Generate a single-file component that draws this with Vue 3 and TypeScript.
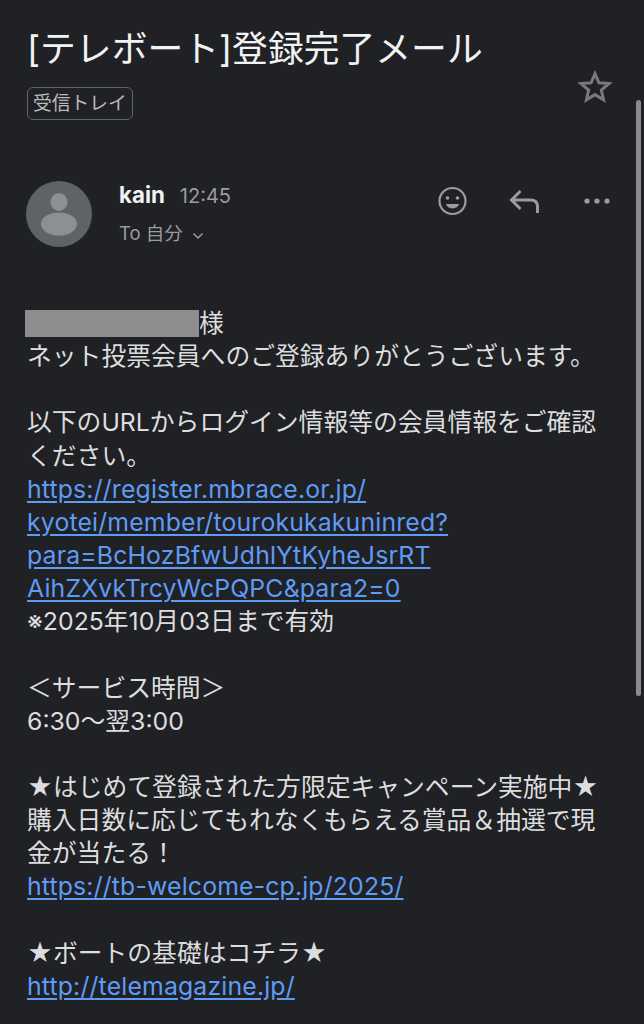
<script setup lang="ts">
interface Line { text?: string; href?: boolean }
const lines: Line[] = [
  { text: 'ネット投票会員へのご登録ありがとうございます。' },
  {},
  { text: '以下のURLからログイン情報等の会員情報をご確認' },
  { text: 'ください。' },
  { text: 'https://register.mbrace.or.jp/', href: true },
  { text: 'kyotei/member/tourokukakuninred?', href: true },
  { text: 'para=BcHozBfwUdhlYtKyheJsrRT', href: true },
  { text: 'AihZXvkTrcyWcPQPC&para2=0', href: true },
  { text: '※2025年10月03日まで有効' },
  {},
  { text: '＜サービス時間＞' },
  { text: '6:30〜翌3:00' },
  {},
  { text: '★はじめて登録された方限定キャンペーン実施中★' },
  { text: '購入日数に応じてもれなくもらえる賞品＆抽選で現' },
  { text: '金が当たる！' },
  { text: 'https://tb-welcome-cp.jp/2025/', href: true },
  {},
  { text: '★ボートの基礎はコチラ★' },
  { text: 'http://telemagazine.jp/', href: true },
]
</script>

<template>
  <div class="page">
    <div class="scrollbar"></div>
    <header class="subject">
      <div class="subject-main">
        <h1 class="title">[テレボート]登録完了メール</h1>
        <span class="label">受信トレイ</span>
      </div>
      <svg class="star" viewBox="0 0 34 34" width="34" height="34" aria-hidden="true">
        <path d="M17 3.6l3.9 9.2 10 .8-7.6 6.5 2.3 9.7-8.6-5.2-8.6 5.2 2.3-9.7-7.6-6.5 10-.8z" fill="none" stroke="#77797c" stroke-width="3" stroke-linejoin="miter" />
      </svg>
    </header>

    <section class="sender">
      <svg class="avatar" viewBox="0 0 66 66" width="66" height="66" aria-hidden="true">
        <circle cx="33" cy="33" r="33" fill="#5f6368" />
        <ellipse cx="33" cy="21" rx="8.5" ry="9" fill="#8d8f92" />
        <ellipse cx="33" cy="43" rx="18" ry="11.5" fill="#8d8f92" />
      </svg>
      <div class="meta">
        <div class="meta-top">
          <span class="name">kain</span>
          <span class="time">12:45</span>
        </div>
        <div class="to">To 自分
          <svg class="chev" viewBox="0 0 12 8" width="12" height="8" aria-hidden="true">
            <path d="M1.5 1.5L6 6l4.5-4.5" fill="none" stroke="#9a9c9f" stroke-width="1.5" />
          </svg>
        </div>
      </div>
      <div class="actions">
        <svg viewBox="0 0 30 30" width="30" height="30" aria-hidden="true">
          <circle cx="15.500" cy="15" r="13" fill="none" stroke="#9a9c9f" stroke-width="2.200" />
          <circle cx="10.500" cy="12" r="1.800" fill="#9a9c9f" />
          <circle cx="20.500" cy="12" r="1.800" fill="#9a9c9f" />
          <path d="M9 18h13c-.6 2.800-3.200 4.400-6.500 4.400S9.600 20.800 9 18z" fill="#9a9c9f" />
        </svg>
        <svg viewBox="0 0 32 26" width="32" height="26" aria-hidden="true">
          <path d="M11.500 3l-9 9 9 9M3.500 12h18c4.500 0 7 2.500 7 6.500V25" fill="none" stroke="#9a9c9f" stroke-width="3" />
        </svg>
        <svg viewBox="0 0 28 8" width="28" height="8" aria-hidden="true">
          <circle cx="4" cy="4" r="2.600" fill="#9a9c9f" />
          <circle cx="14" cy="4" r="2.600" fill="#9a9c9f" />
          <circle cx="24" cy="4" r="2.600" fill="#9a9c9f" />
        </svg>
      </div>
    </section>

    <main class="body">
      <div class="line"><span class="redact"></span>様</div>
      <div v-for="(l, i) in lines" :key="i" class="line">
        <a v-if="l.href" class="link">{{ l.text }}</a>
        <template v-else-if="l.text">{{ l.text }}</template>
        <template v-else>&nbsp;</template>
      </div>
    </main>
  </div>
</template>

<style>
html, body { margin: 0; background: #202124; }
</style>

<style scoped>
.page {
  position: relative;
  width: 644px;
  height: 1024px;
  overflow: hidden;
  background: #202124;
  color: #e8eaed;
  font-family: Inter, "Noto Sans CJK JP", sans-serif;
}
.scrollbar {
  position: absolute;
  right: 3px;
  top: 100px;
  width: 5px;
  height: 596px;
  border-radius: 3px;
  background: #8a8b8d;
}
.subject {
  display: flex;
  justify-content: space-between;
  padding: 27px 32px 0 27px;
}
.title {
  margin: 0;
  font-size: 35.8px;
  line-height: 44px;
  font-weight: 400;
  color: #f1f2f3;
}
.label {
  display: inline-block;
  margin-top: 16px;
  padding: 0 5px;
  height: 31px;
  line-height: 31px;
  font-size: 18.8px;
  color: #b9babc;
  border: 1.5px solid #5f6368;
  border-radius: 6px;
}
.star { margin-top: 43px; }
.sender {
  display: flex;
  align-items: flex-start;
  margin-top: 61px;
  padding: 0 33px 0 26px;
}
.avatar { flex: none; }
.meta { margin-left: 27px; flex: 1; }
.meta-top { display: flex; align-items: baseline; gap: 15px; height: 28px; line-height: 28px; }
.name { font-size: 22.300px; font-weight: 700; color: #f1f2f3; }
.time { font-size: 20px; color: #9a9c9f; }
.to { margin-top: 11px; font-size: 18.5px; line-height: 26px; color: #9a9c9f; }
.chev { margin-left: 4px; }
.actions {
  display: flex;
  align-items: center;
  gap: 42px;
  height: 40px;
}
.body {
  margin-top: 60px;
  padding: 0 27px;
  font-size: 24.8px;
  line-height: 33.15px;
  color: #dcdddf;
}
.line { white-space: nowrap; height: 33.15px; }
.redact {
  display: inline-block;
  width: 174px;
  height: 27px;
  margin-left: -2px;
  vertical-align: -5px;
  background: #8e8e8e;
}
.link {
  color: #5e9bf5;
  letter-spacing: 0.16px;
  text-decoration: underline;
  text-underline-offset: 3px;
}
</style>
